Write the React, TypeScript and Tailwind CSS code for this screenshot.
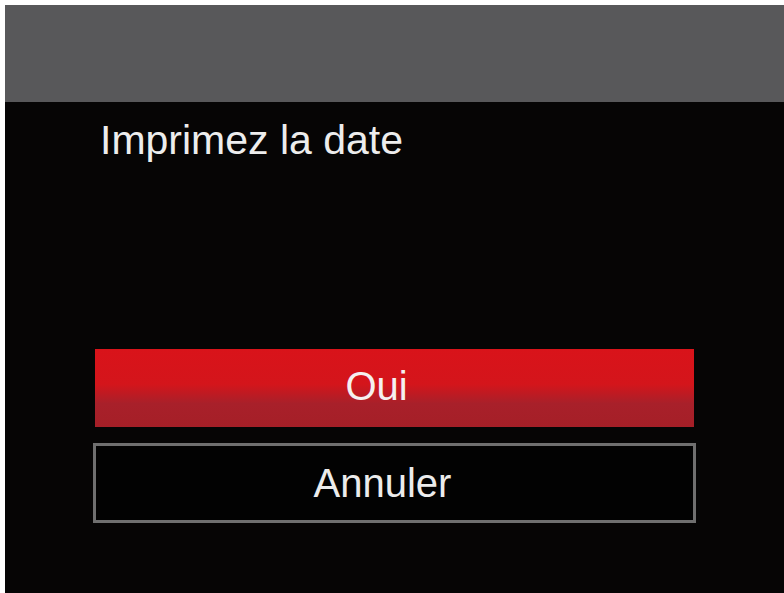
export default function App() {
  return (
    <div className="h-[593px] w-[784px] overflow-hidden bg-white pl-[5px] pt-[5px] font-['Liberation_Sans',Arial,sans-serif]">
      <div className="flex h-full flex-col bg-[#060505]">
        <div className="h-[97px] shrink-0 bg-[#58585a]" />
        <div className="mt-[18px] pl-[95px] text-[41px] leading-none text-[#ededed]">Imprimez la date</div>
        <div className="ml-[88px] mt-[188px] flex w-[603px] flex-col gap-[16px]">
          <div className="mx-[2px] flex h-[78px] items-center justify-center bg-[linear-gradient(to_bottom,#d9131a_0%,#d4151b_45%,#a8202a_70%,#a51f27_100%)] pb-[4px] pr-[36px] text-[40px] leading-none text-[#f5f0f0]">
            Oui
          </div>
          <div className="flex h-[80px] items-center justify-center border-[3px] border-[#6f6f6f] bg-[#020202] pr-[24px] text-[40px] leading-none text-[#ececec]">
            Annuler
          </div>
        </div>
      </div>
    </div>
  );
}
